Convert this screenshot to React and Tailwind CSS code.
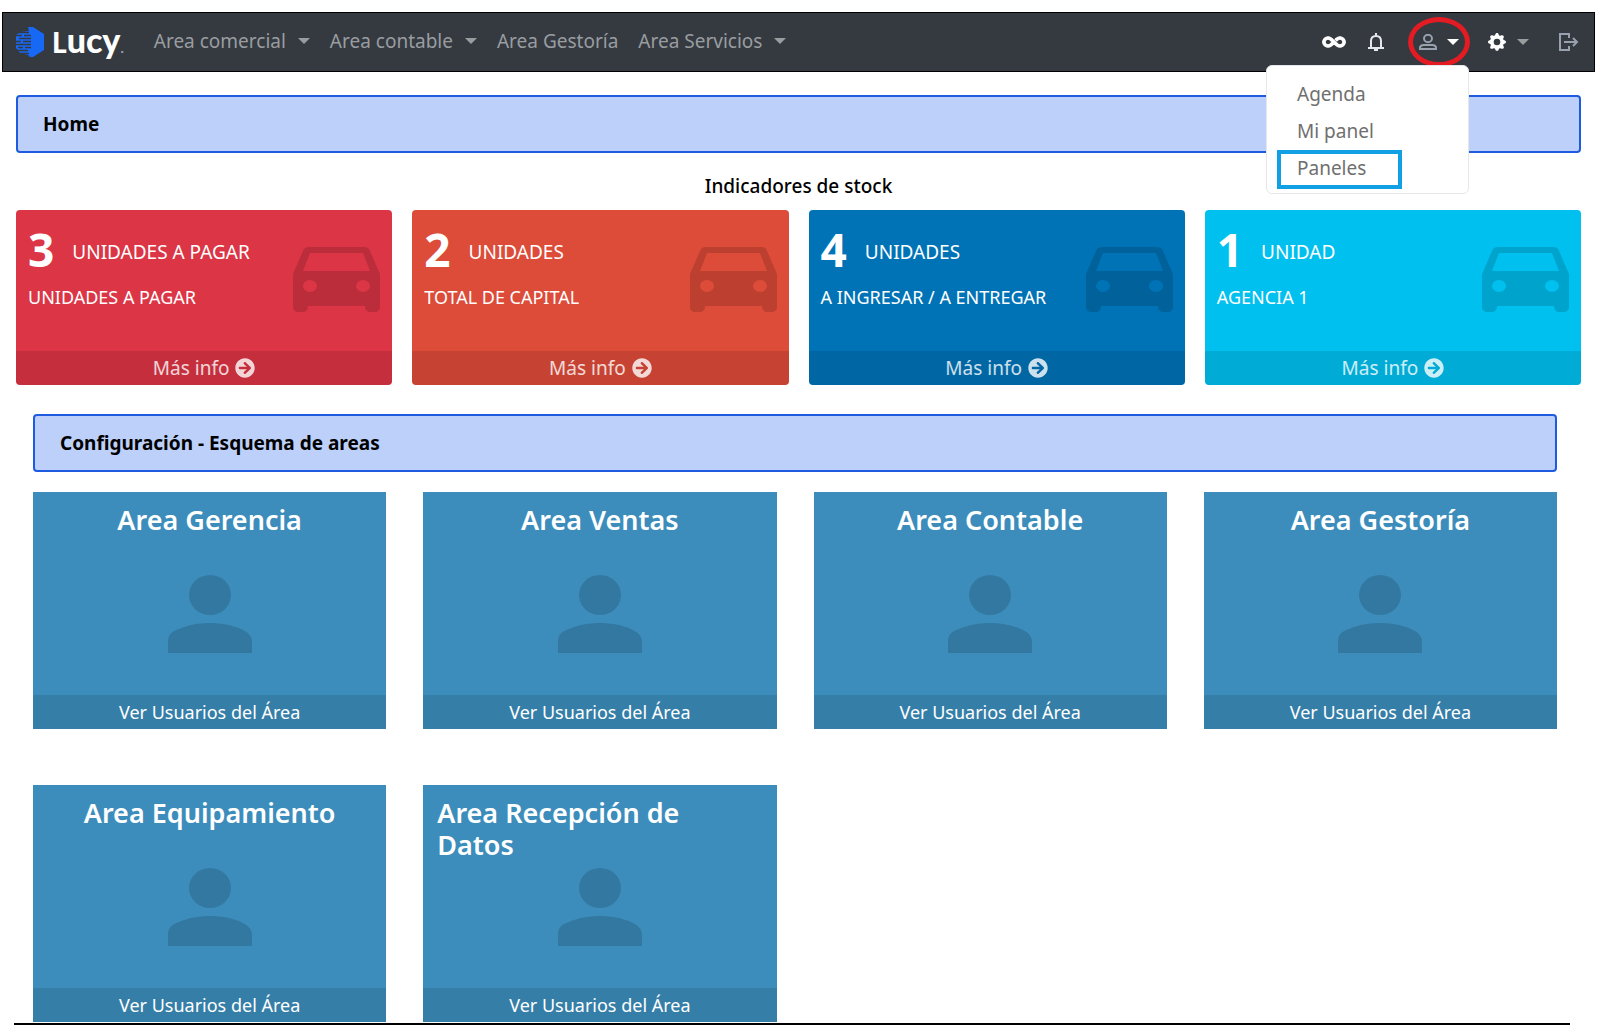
import { useState } from "react";
import clsx from "clsx";
import { BsGearFill } from "react-icons/bs";
import { FaArrowCircleRight } from "react-icons/fa";
import { IoMdInfinite } from "react-icons/io";

const navItems = [
  { label: "Area comercial", hasMenu: true },
  { label: "Area contable", hasMenu: true },
  { label: "Area Gestoría", hasMenu: false },
  { label: "Area Servicios", hasMenu: true },
];

const indicators = [
  { value: 3, unit: "UNIDADES A PAGAR", detail: "UNIDADES A PAGAR", color: "bg-[#dc3545]" },
  { value: 2, unit: "UNIDADES", detail: "TOTAL DE CAPITAL", color: "bg-[#dd4b39]" },
  { value: 4, unit: "UNIDADES", detail: "A INGRESAR / A ENTREGAR", color: "bg-[#0073b7]" },
  { value: 1, unit: "UNIDAD", detail: "AGENCIA 1", color: "bg-[#00c0ef]" },
];

const areas = [
  "Area Gerencia",
  "Area Ventas",
  "Area Contable",
  "Area Gestoría",
  "Area Equipamiento",
  "Area Recepción de Datos",
];

function Caret({ className }) {
  return (
    <svg viewBox="0 0 12 6" className={clsx("h-1.5 w-3 fill-current", className)} aria-hidden="true">
      <path d="M0 0h12L6 6z" />
    </svg>
  );
}

function Logo() {
  return (
    <a href="#" className="flex items-center gap-2 text-white" aria-label="Lucy">
      <svg viewBox="0 0 28 30" className="h-[30px] w-7" aria-hidden="true">
        <path fill="#1769f5" d="M12 0h5l11 7v16l-11 7h-3l-2-2-8-2-4-5V8l4-3 9-1z" />
        <path
          stroke="#343a40"
          strokeWidth="1.4"
          d="M2 5.5h11M0 8.5h6M8 8.5h7M3 11.5h12M0 14.5h5M7 14.5h8M0 17.5h15M2 20.5h5M9 20.5h6M0 23.5h12M4 26.5h9"
        />
      </svg>
      <span className="flex items-baseline pb-1 font-['Lato',sans-serif] leading-none font-black">
        <span className="text-[28px]">L</span>
        <span className="text-[34px]">ucy</span>
        <span className="text-sm text-gray-400">.</span>
      </span>
    </a>
  );
}

function BellIcon() {
  return (
    <svg viewBox="0 0 16 18" className="h-[18px] w-4" fill="none" stroke="currentColor" strokeWidth="2" aria-hidden="true">
      <path d="M3 14V8C3 4.5 5.5 3 8 3S13 4.5 13 8V14M0 15H16" />
      <path d="M8 0V3M6 17H10" />
    </svg>
  );
}

function UserIcon() {
  return (
    <svg viewBox="0 0 18 16" className="h-4 w-[18px]" fill="none" stroke="currentColor" strokeWidth="2" aria-hidden="true">
      <ellipse cx="9" cy="4.5" rx="4" ry="3.7" />
      <path d="M1 15V14C1 11.5 3 11 5 11H13C15 11 17 11.5 17 14V15z" />
    </svg>
  );
}

function ExitIcon() {
  return (
    <svg viewBox="0 0 20 18" className="h-[18px] w-5" fill="none" stroke="currentColor" strokeWidth="2" aria-hidden="true">
      <path d="M10 5V1H1v16h9v-4" />
      <path d="M5 9h13M14 5l4 4-4 4" />
    </svg>
  );
}

function CarIcon() {
  return (
    <svg viewBox="0 0 87 65" className="mt-[37px] h-[65px] w-[87px] fill-black/15" aria-hidden="true">
      <path
        fillRule="evenodd"
        d="M16 0H71C74 0 76 1 77 4L87 27V60C87 63 85 65 81 65H78C74 65 72 63 72 59H15C15 63 13 65 9 65H6C2 65 0 63 0 60V27L10 4C11 1 13 0 16 0ZM17 6L10 24H77L70 6ZM17 33A7 6 0 1 0 17 45A7 6 0 1 0 17 33ZM70 33A7 6 0 1 0 70 45A7 6 0 1 0 70 33Z"
      />
    </svg>
  );
}

function PersonIcon() {
  return (
    <svg viewBox="0 0 84 78" className="h-[78px] w-[84px] fill-black/15" aria-hidden="true">
      <ellipse cx="42" cy="20" rx="21" ry="20" />
      <path d="M0 78V66C0 60 4 56 11 54C20 50 31 48 42 48S64 50 73 54C80 57 84 61 84 67V78z" />
    </svg>
  );
}

function UserMenu() {
  return (
    <div className="absolute top-[48px] right-px z-10 w-[203px] rounded-md border border-gray-200 bg-white pt-2.5 pb-1 pl-2.5 text-[19px] text-[#6f6f6f]">
      <a href="#" className="block px-5 py-[5px] leading-[27px]">Agenda</a>
      <a href="#" className="block px-5 py-[5px] leading-[27px]">Mi panel</a>
      <a href="#" className="block w-[125px] border-4 border-[#12a0e4] px-4 pb-0.5 leading-[29px]">Paneles</a>
    </div>
  );
}

function Navbar() {
  const [menuOpen, setMenuOpen] = useState(true);

  return (
    <header className="relative mr-[5px] ml-0.5 flex h-[60px] items-center border border-black bg-[#343a40] pr-[15px] pl-[13px]">
      <Logo />
      <nav className="ml-[30px] flex items-center gap-5 pb-0.5">
        {navItems.map((item) => (
          <button key={item.label} className="flex items-center gap-3 text-[19px] text-[#9a9da0]">
            {item.label}
            {item.hasMenu && <Caret />}
          </button>
        ))}
      </nav>
      <div className="ml-auto flex items-center text-white">
        <button aria-label="Enlaces" className="mr-5">
          <IoMdInfinite size={28} stroke="currentColor" strokeWidth={20} />
        </button>
        <button aria-label="Notificaciones" className="mr-6 text-gray-200">
          <BellIcon />
        </button>
        <div className="relative mr-[18px]">
          <button
            aria-label="Usuario"
            aria-expanded={menuOpen}
            onClick={() => setMenuOpen(!menuOpen)}
            className="flex h-[50px] w-[62px] items-center justify-center gap-2.5 rounded-[50%] border-[5px] border-[#e31b23]">
            <span className="text-gray-400">
              <UserIcon />
            </span>
            <Caret />
          </button>
          {menuOpen && <UserMenu />}
        </div>
        <button aria-label="Configuración" className="mr-[30px] flex items-center gap-[11px]">
          <BsGearFill size={18} />
          <Caret className="text-[#9a9da0]" />
        </button>
        <button aria-label="Salir" className="text-gray-400">
          <ExitIcon />
        </button>
      </div>
    </header>
  );
}

function SectionTitle({ children }) {
  return (
    <h2 className="flex h-[58px] items-center rounded border-2 border-[#1f5be0] bg-[#bcd0fa] px-[25px] text-[19px] font-bold text-black">
      {children}
    </h2>
  );
}

function IndicatorCard({ value, unit, detail, color }) {
  return (
    <article className={clsx("flex h-[175px] flex-col justify-between rounded-sm text-white", color)}>
      <div className="flex items-start justify-between px-3">
        <div>
          <p className="flex items-center gap-[18px] pt-1.5">
            <strong className="text-[46px] leading-[66px] font-bold">{value}</strong>
            <span className="pt-1.5 text-[19px]">{unit}</span>
          </p>
          <p className="text-lg leading-[30px]">{detail}</p>
        </div>
        <CarIcon />
      </div>
      <a href="#" className="flex h-[34px] items-center justify-center gap-1.5 rounded-b-sm bg-black/10 text-[19px] text-white/80">
        Más info <FaArrowCircleRight size={20} />
      </a>
    </article>
  );
}

function AreaCard({ name }) {
  return (
    <article className="relative flex h-[237px] flex-col items-center justify-between bg-[#3c8dbc] text-white">
      <h3 className="px-3.5 pt-3 text-[27px] leading-8 font-semibold">{name}</h3>
      <div className="absolute top-[83px]">
        <PersonIcon />
      </div>
      <a href="#" className="flex h-[34px] w-full items-center justify-center bg-black/10 text-lg">
        Ver Usuarios del Área
      </a>
    </article>
  );
}

export default function App() {
  return (
    <div className="bg-white pt-3 font-['Noto_Sans',sans-serif] text-black">
      <Navbar />
      <main className="pr-[19px] pl-4">
        <div className="pt-[23px]">
          <SectionTitle>Home</SectionTitle>
        </div>
        <h1 className="pt-[19px] pb-[10px] text-center text-[19px] leading-7 font-medium">Indicadores de stock</h1>
        <section className="grid grid-cols-4 gap-5">
          {indicators.map((item, index) => (
            <IndicatorCard key={index} {...item} />
          ))}
        </section>
        <section className="pt-[29px] pr-6 pl-[17px]">
          <SectionTitle>Configuración - Esquema de areas</SectionTitle>
          <div className="mt-5 grid grid-cols-4 gap-x-[37px] gap-y-14">
            {areas.map((name) => (
              <AreaCard key={name} name={name} />
            ))}
          </div>
        </section>
      </main>
      <hr className="mt-px mr-[30px] ml-3.5 border-t-2 border-black" />
    </div>
  );
}
